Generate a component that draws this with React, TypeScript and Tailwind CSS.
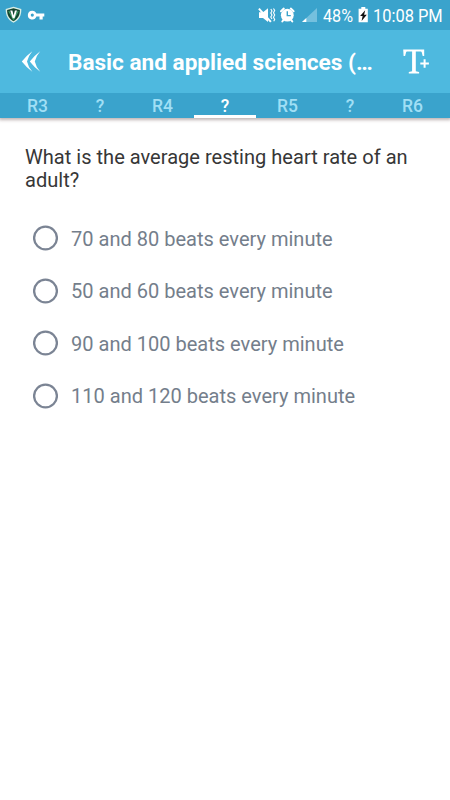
const options = [
  '70 and 80 beats every minute',
  '50 and 60 beats every minute',
  '90 and 100 beats every minute',
  '110 and 120 beats every minute',
];
const tabs = ['R3', '?', 'R4', '?', 'R5', '?', 'R6'];

function LeftStatusIcons() {
  return (
    <svg width="56" height="30" viewBox="0 0 56 30" className="shrink-0">
      <path d="M13.5 6.800 21.300 9c.2 6-1.800 10.800-7.800 13.800C7.600 19.800 5.600 15 5.700 9Z" fill="#d9efe6" />
      <path d="M13.500 8.300 19.900 10c0 4.800-1.700 8.600-6.400 11.200C8.800 18.600 7.100 14.800 7.100 10Z" fill="#15442f" />
      <path d="M8.800 11 13.500 19.600 18.200 11" fill="none" stroke="#3f9f6a" strokeWidth="1.200" />
      <path d="M10.200 10.500h2.200l1.200 5 1.300-5h2.100l-2.500 7.700h-1.800Z" fill="#fff" />
      <path fillRule="evenodd" d="M32.300 10.700a4.400 4.400 0 0 1 4.100 2.900H44.300v3H42.700v2.900H39.500v-2.900H36.400a4.400 4.400 0 1 1-4.100-5.900Zm0 2.800a1.600 1.600 0 1 0 0 3.200 1.600 1.600 0 0 0 0-3.200Z" fill="#fff" />
    </svg>
  );
}

function RightStatusIcons() {
  return (
    <svg width="66" height="30" viewBox="254 0 66 30" className="shrink-0">
      <path d="M259 12.200h4l5-4v13.800l-5-4h-4Z" fill="#fff" />
      <path d="m258.900 8.600 12 13.200" stroke="#fff" strokeWidth="2" />
      <path d="m270.800 9 1.200 2-1.200 2 1.200 2-1.200 2 1.200 2M273.500 8.500l1.200 2.100-1.200 2.200 1.200 2.200-1.200 2.200 1.200 2.200-1 1.800" fill="none" stroke="#fff" strokeWidth="1.100" />
      <circle cx="287.300" cy="15.200" r="6.400" fill="#fff" />
      <path d="m281 11.200 2.800-2.600M293.600 11.200l-2.800-2.600M283.300 20.200l-1 1.300M291.300 20.200l1 1.300" stroke="#fff" strokeWidth="2" strokeLinecap="round" />
      <path d="M287.300 11.200v4.400h3.500" fill="none" stroke="#3aa3cc" strokeWidth="1.400" />
      <path d="M317 8v14h-15Z" fill="#74c0de" />
      <path d="M306.300 18v4H302Z" fill="#fff" />
    </svg>
  );
}

export default function App() {
  return (
    <main className="h-[800px] w-[450px] overflow-hidden bg-white font-['Roboto',sans-serif]">
      <header className="h-[118px] bg-[#4eb9df] shadow-[0_1px_3px_1px_#806c6c80]">
        <div className="flex h-[30px] items-center bg-[#3aa3cc] text-[19px] leading-[30px] text-white">
          <LeftStatusIcons />
          <div className="w-[198px] shrink-0" />
          <RightStatusIcons />
          <span className="ml-[3px] w-[31px] shrink-0 origin-left scale-x-[0.850] whitespace-nowrap pt-[1px]">48%</span>
          <svg width="12" height="30" viewBox="357 0 12 30" className="ml-[3px] shrink-0">
            <path d="M361.300 7h4v1.800h2.500V22.300h-9.200V8.800h2.700Z" fill="#fff" />
            <path d="m365.200 10.200-5.100 5.900h2.500l-1 5 5.200-6.300h-2.700Z" fill="#111" />
          </svg>
          <span className="ml-[4px] w-[70px] shrink-0 origin-left scale-x-[0.865] whitespace-nowrap pt-[1px]">10:08 PM</span>
        </div>
        <div className="flex h-[63px] items-center">
          <svg width="68" height="63" viewBox="0 30 68 63" className="shrink-0">
            <path d="M32.300 51.200Q28.200 56 27 61.500 28.200 67 32.300 71.800 26.500 67.500 21.800 61.500 26.500 55.500 32.300 51.200ZM40.200 51.200Q36 56 34.800 61.500 36 67 40.200 71.800 34.400 67.500 29.800 61.500 34.400 55.500 40.200 51.200Z" fill="#fff" />
          </svg>
          <h1 className="w-[305px] whitespace-nowrap pt-[2px] text-[22.600px] font-bold leading-7 text-white">Basic and applied sciences (…</h1>
          <svg width="77" height="63" viewBox="373 30 77 63" className="shrink-0">
            <path d="M403.200 49.600h21v6.500h-1.500l-1-3.900c-.1-.5-.4-.7-.9-.7h-5v19.800l3.300.7v1.400h-10.300v-1.400l3.300-.7V51.500h-5.100c-.5 0-.8.2-.9.700l-1 3.900h-1.500Z" fill="#fff" />
            <path d="M424.600 59v9M420.400 63.500h8" stroke="#4eb9df" strokeWidth="4" />
            <path d="M424.600 59.200v8.600M420.300 63.500h8.600" stroke="#fff" strokeWidth="2" />
          </svg>
        </div>
        <nav className="flex h-[25px] justify-center bg-[#3aa3cc] text-[17.500px] font-medium leading-[26px]">
          {tabs.map((t, i) => (
            <div key={i} className={i === 3 ? 'w-[62.500px] border-b-[3px] border-white text-center text-white' : 'w-[62.500px] text-center text-[#a0dff5]'}>
              {t}
            </div>
          ))}
        </nav>
      </header>
      <section className="pl-[25px] pt-[28px]">
        <p className="whitespace-nowrap text-[20.070px] leading-[23px] text-[#373737]">
          What is the average resting heart rate of an<br />adult?
        </p>
        <div className="pl-[7.500px] pt-[20px]">
          {options.map((o) => (
            <div key={o} className="flex h-[52.500px] items-center gap-[13.500px]">
              <svg width="25" height="26" viewBox="0 0 25 26" className="shrink-0">
                <circle cx="12.500" cy="13" r="11.400" fill="none" stroke="#7b8494" strokeWidth="2.300" />
              </svg>
              <span className="whitespace-nowrap pt-[1px] text-[20.050px] leading-6 text-[#747e8b]">{o}</span>
            </div>
          ))}
        </div>
      </section>
    </main>
  );
}
